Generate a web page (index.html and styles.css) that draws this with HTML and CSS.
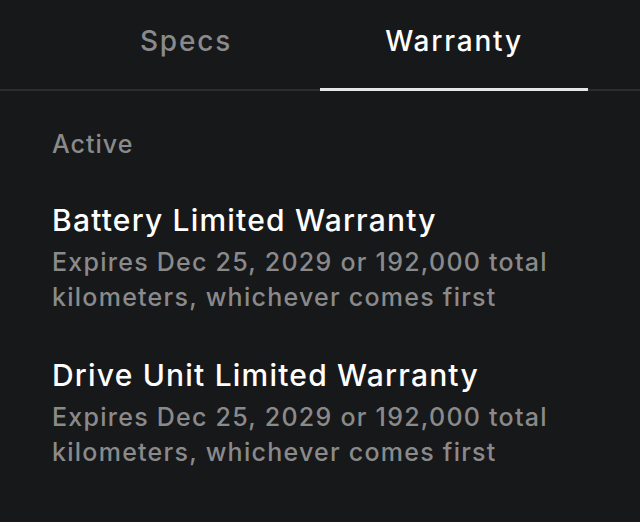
FILE: index.html
```html
<!DOCTYPE html>
<html lang="en">
<head>
  <meta charset="UTF-8">
  <meta name="viewport" content="width=device-width, initial-scale=1.0">
  <title>Warranty</title>
  <link rel="stylesheet" href="styles.css">
</head>
<body>

  <!-- Tabs -->
  <nav class="tabs">
    <div class="tab">Specs</div>
    <div class="tab active">Warranty</div>
  </nav>

  <!-- Warranty list -->
  <main class="warranty">
    <h3 class="section-title">Active</h3>

    <div class="item">
      <h2>Battery Limited Warranty</h2>
      <p>Expires Dec 25, 2029 or 192,000 total kilometers, whichever comes first</p>
    </div>

    <div class="item">
      <h2>Drive Unit Limited Warranty</h2>
      <p>Expires Dec 25, 2029 or 192,000 total kilometers, whichever comes first</p>
    </div>
  </main>

</body>
</html>
```

FILE: styles.css
```css
* {
  margin: 0;
  padding: 0;
  box-sizing: border-box;
}

body {
  font-family: Inter, "Noto Sans", sans-serif;
  background-color: #17181a;
  color: #fff;
  width: 640px;
  height: 522px;
  overflow: hidden;
}

/* Tabs */
.tabs {
  display: flex;
  padding: 0 52px;
  border-bottom: 2px solid #2b2c2e;
}

.tab {
  flex: 1;
  text-align: center;
  font-size: 28px;
  font-weight: 500;
  letter-spacing: 1.8px;
  color: #8a8a8b;
  padding: 21px 0 27px;
  line-height: 40px;
  border-bottom: 3px solid transparent;
  margin-bottom: -2px;
}

.tab.active {
  color: #fff;
  border-bottom-color: #e6e6e6;
}

/* Warranty list */
.warranty {
  padding: 35px 52px 0;
}

.section-title {
  font-size: 25px;
  font-weight: 500;
  letter-spacing: 1px;
  color: #8a8a8b;
  line-height: 36px;
  margin-bottom: 38px;
}

.item {
  margin-bottom: 40px;
}

.item h2 {
  font-size: 30px;
  font-weight: 500;
  letter-spacing: 1.2px;
  line-height: 40px;
}

.item p {
  margin-top: 5px;
  font-size: 25px;
  font-weight: 500;
  letter-spacing: 1.25px;
  color: #8a8a8b;
  line-height: 35px;
}
```
